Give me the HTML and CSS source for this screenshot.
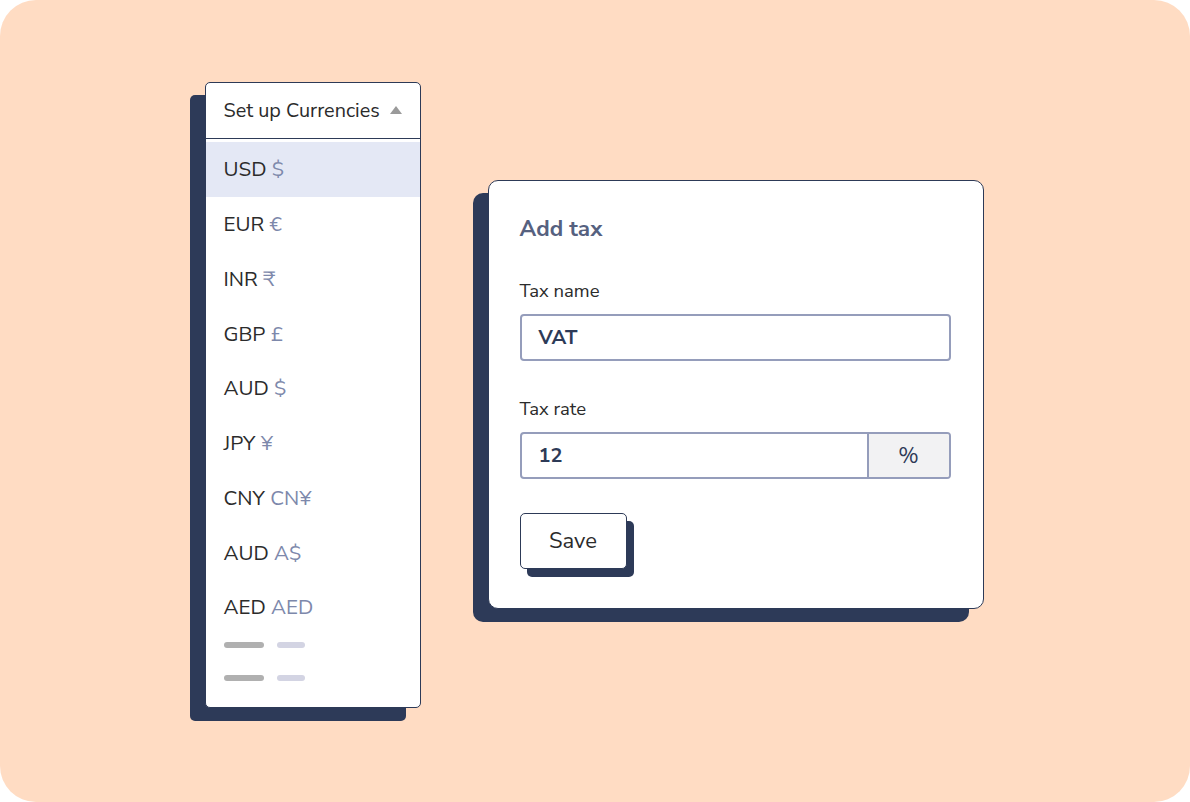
FILE: index.html
```html
<!DOCTYPE html>
<html>
<head>
<meta charset="utf-8">
<link rel="stylesheet" href="styles.css">
</head>
<body>
<div class="canvas">
  <div class="dropdown">
    <div class="dd-head">
      <span>Set up Currencies</span>
      <span class="caret"></span>
    </div>
    <ul class="dd-list">
      <li class="row selected">USD <span class="sym">$</span></li>
      <li class="row">EUR <span class="sym">€</span></li>
      <li class="row">INR <span class="sym">₹</span></li>
      <li class="row">GBP <span class="sym">£</span></li>
      <li class="row">AUD <span class="sym">$</span></li>
      <li class="row">JPY <span class="sym">¥</span></li>
      <li class="row">CNY <span class="sym">CN¥</span></li>
      <li class="row">AUD <span class="sym">A$</span></li>
      <li class="row">AED <span class="sym">AED</span></li>
      <li class="bars first"><span class="bar gray"></span><span class="bar light"></span></li>
      <li class="bars"><span class="bar gray"></span><span class="bar light"></span></li>
    </ul>
  </div>
  <div class="card">
    <h2 class="title">Add tax</h2>
    <label class="label">Tax name</label>
    <div class="input"><span class="value">VAT</span></div>
    <label class="label">Tax rate</label>
    <div class="input split">
      <span class="value">12</span>
      <span class="suffix">%</span>
    </div>
    <button class="save">Save</button>
  </div>
</div>
</body>
</html>
```
FILE: styles.css
```css
* { box-sizing: border-box; }
html, body { margin: 0; padding: 0; background: #ffffff; }
body { width: 1190px; height: 802px; overflow: hidden; font-family: "Nunito Sans", Lato, "Open Sans", sans-serif; }
.canvas {
  width: 1190px; height: 802px;
  background: #ffdcc3;
  border-radius: 36px;
  display: flex;
  align-items: flex-start;
  padding: 82px 0 0 205px;
  gap: 67px;
}
.dropdown {
  width: 216px; height: 626px;
  background: #fff;
  border: 1.5px solid #2d3a57;
  border-radius: 5px;
  box-shadow: -15px 13px 0 #2d3a58;
  overflow: hidden;
}
.dd-head {
  height: 56px;
  border-bottom: 1.5px solid #2d3a57;
  display: flex; align-items: center; justify-content: space-between;
  padding: 0 18px 0 17.5px;
  font-size: 19.8px; color: #2b2b2b;
}
.caret {
  width: 0; height: 0;
  border-left: 6px solid transparent;
  border-right: 6px solid transparent;
  border-bottom: 8px solid #9a9a9a;
  margin-top: -2px;
}
.dd-list { list-style: none; margin: 0; padding: 3px 0 0; }
.row {
  height: 54.75px;
  display: flex; align-items: center;
  padding-left: 17.5px;
  font-size: 20.6px; color: #2b2b2b;
  white-space: pre;
}
.row.selected { background: #e4e8f5; }
.sym { color: #7d88ab; }
.bars { height: 6px; margin-top: 27px; display: flex; gap: 13px; padding-left: 17.5px; }
.bars.first { margin-top: 7px; }
.bar { display: block; height: 6px; border-radius: 3px; }
.bar.gray { width: 40px; background: #b0b0b0; }
.bar.light { width: 28px; background: #d3d4e3; }
.card {
  margin-top: 98px;
  width: 496px; height: 429px;
  background: #fff;
  border: 1.5px solid #2d3a57;
  border-radius: 10px;
  box-shadow: -15px 13px 0 #2d3a58;
  padding: 34px 32px 0 30.5px;
  display: flex; flex-direction: column; align-items: flex-start;
}
.title { margin: 0; font-size: 22.5px; line-height: 28px; font-weight: 700; color: #56617f; }
.label { display: block; margin-top: 36px; font-size: 18.5px; line-height: 24px; color: #2b2b2b; }
.input {
  margin-top: 11px;
  width: 431px; height: 47px;
  border: 2px solid #959dbb;
  border-radius: 4px;
  display: flex; align-items: center;
  overflow: hidden;
}
.value { padding-left: 17px; font-size: 20px; font-weight: 700; color: #2d3a57; flex: 1; }
.split { align-items: stretch; }
.split .value { display: flex; align-items: center; }
.suffix {
  width: 82px;
  background: #f2f2f3;
  border-left: 2px solid #959dbb;
  display: flex; align-items: center; justify-content: center;
  font-size: 22px; color: #2d3a57;
}
.save {
  margin-top: 34px;
  width: 107px; height: 56px;
  background: #fff;
  border: 1.5px solid #2d3a57;
  border-radius: 5px;
  box-shadow: 7px 8px 0 #2d3a58;
  font-family: inherit;
  font-size: 22px; color: #2b2b2b;
  padding: 0;
}
```
